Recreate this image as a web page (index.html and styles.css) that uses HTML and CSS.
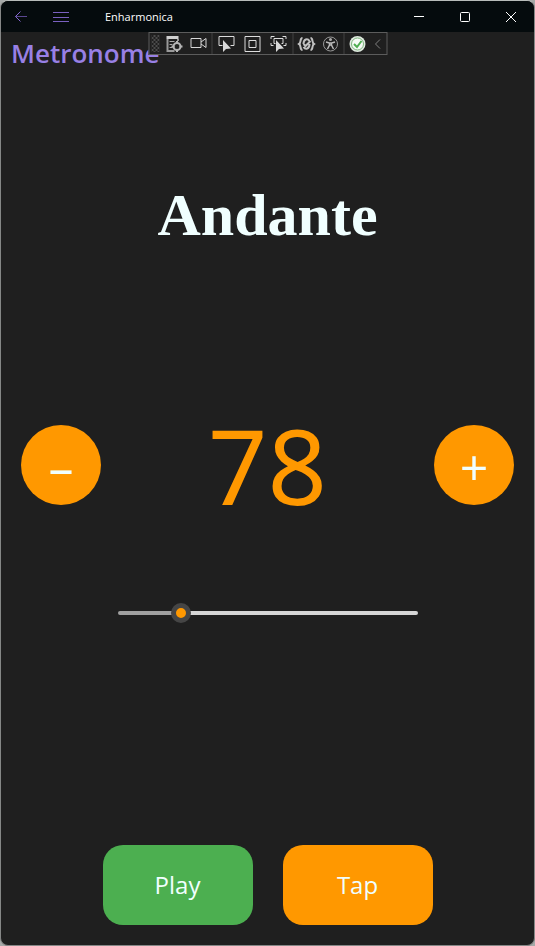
FILE: index.html
```html
<!DOCTYPE html>
<html lang="en">
<head>
<meta charset="utf-8">
<meta name="viewport" content="width=device-width, initial-scale=1">
<title>Enharmonica</title>
<link rel="stylesheet" href="styles.css">
</head>
<body>
<div class="window">
  <header class="titlebar">
    <button class="nav-button" aria-label="Back">
      <svg width="14" height="12" viewBox="0 0 14 12" fill="none" stroke="#8468cf"><path d="M1.500 5.500H13" stroke="#5b4892"/><path d="M6.500 .5l-5 5 5 5"/></svg>
    </button>
    <button class="nav-button" aria-label="Menu">
      <svg width="16" height="12" viewBox="0 0 16 12" stroke="#7a60c0"><path d="M0 1.500H16M0 6.500H16M0 10.500H16"/></svg>
    </button>
    <span class="app-name">Enharmonica</span>
    <button class="caption-button" aria-label="Minimize">
      <svg width="12" height="12" viewBox="0 0 12 12" stroke="#fff"><path d="M1 5.500H11"/></svg>
    </button>
    <button class="caption-button" aria-label="Maximize">
      <svg width="12" height="12" viewBox="0 0 12 12" stroke="#fff" fill="none"><rect x="1.500" y="1.500" width="9" height="9" rx="1"/></svg>
    </button>
    <button class="caption-button" aria-label="Close">
      <svg width="12" height="12" viewBox="0 0 12 12" stroke="#fff"><path d="m1 1 10 10M11 1 1 11"/></svg>
    </button>
  </header>

  <div class="page-header">
    <h1 class="page-title">Metronome</h1>
    <div class="debug-bar" role="toolbar" aria-label="Debug tools">
      <span class="grip"></span>
      <button class="tool" aria-label="Live visual tree">
        <svg width="18" height="18" viewBox="0 0 18 18" fill="none"><path d="M1 1h12v3H1z" fill="#d0d0d0"/><path d="M2 4v12h7M12.500 4v2" stroke="#999" stroke-width="2"/><path d="M4 6.500h5M4 9.500h3M4 12.500h3" stroke="#aaa"/><circle cx="11.500" cy="11.500" r="3.500" stroke="#b5b5b5" stroke-width="2"/><path d="M11.500 6v3M11.500 14v3M6 11.500h3M14 11.500h3" stroke="#b5b5b5" stroke-width="2"/></svg>
      </button>
      <button class="tool" aria-label="Record">
        <svg width="18" height="18" viewBox="0 0 18 18" fill="none" stroke="#d8d8d8"><path d="M1.500 3.500h10v9h-10zM11.500 7l5-3.500v9l-5-3.500"/></svg>
      </button>
      <span class="divider"></span>
      <button class="tool wide" aria-label="Select element">
        <svg width="18" height="18" viewBox="0 0 18 18" fill="none"><path d="M5 10.500H1.500v-9h15v9H13" stroke="#ddd"/><path d="M5.500 5v12l3-3 5-.500z" fill="#d8d8d8"/></svg>
      </button>
      <button class="tool wide" aria-label="Display layout adorners">
        <svg width="18" height="18" viewBox="0 0 18 18" fill="none" stroke="#ddd"><path d="M1.500 1.500h15v15h-15zM5.500 5.500h7v7h-7z"/></svg>
      </button>
      <button class="tool wide" aria-label="Track focused element">
        <svg width="18" height="18" viewBox="0 0 18 18" fill="none"><path d="M1.500 4V1.500H5M13 1.500h3.500V4M1.500 8v2.500H4M14 10.500h2.500V8M6 8.500H4.500v-5h9v5H12" stroke="#ddd"/><path d="M6.500 5v12l3-3 5-.500z" fill="#d8d8d8"/></svg>
      </button>
      <span class="divider"></span>
      <button class="tool" aria-label="Binding failures">
        <svg width="18" height="18" viewBox="0 0 18 18" fill="none" stroke="#c0c0c0" stroke-width="2"><path d="M5 3C2 3 4 8 1.500 9c2.500 1 .5 6 3.500 6M13 3c3 0 1 5 3.500 6-2.500 1-.5 6-3.500 6"/><path d="M6 9c0-5 4-6 6-3M12 9c0 5-4 6-6 3M6 9l2 2 5-5"/></svg>
      </button>
      <button class="tool" aria-label="Accessibility">
        <svg width="18" height="18" viewBox="0 0 18 18" fill="none" stroke="#999"><circle cx="9" cy="9" r="7"/><circle cx="9" cy="4.500" r="1.500" fill="#aaa" stroke="none"/><path d="M4.500 7 8 8v2l-2 4M13.500 7 10 8v2l2 4M8 8h2v2H8z" stroke="#b8b8b8" stroke-width="1.500"/></svg>
      </button>
      <span class="divider"></span>
      <button class="tool" aria-label="Hot reload ready">
        <svg width="18" height="18" viewBox="0 0 18 18"><circle cx="9" cy="9" r="8" fill="#dfe9df"/><circle cx="9" cy="9" r="6" fill="#f6fbf6" stroke="#7fb57f"/><path d="m5.500 9 3 3 4.500-6" fill="none" stroke="#4fae52" stroke-width="2"/></svg>
      </button>
      <button class="tool narrow" aria-label="Collapse toolbar">
        <svg width="8" height="12" viewBox="0 0 8 12" fill="none" stroke="#808080"><path d="M6.500 1.500 2 6l4.500 4.500"/></svg>
      </button>
    </div>
  </div>

  <main class="metronome">
    <h2 class="tempo-name">Andante</h2>
    <div class="tempo-row">
      <button class="round-button" aria-label="Slower">–</button>
      <output class="bpm" for="tempo">78</output>
      <button class="round-button" aria-label="Faster">+</button>
    </div>
    <input class="tempo-slider" id="tempo" type="range" min="40" max="240" value="78" aria-label="Tempo">
    <div class="actions">
      <button class="action play">Play</button>
      <button class="action tap">Tap</button>
    </div>
  </main>
</div>
</body>
</html>
```

FILE: styles.css
```css
* {
  box-sizing: border-box;
}

html {
  background: #a6a9a8;
}

body {
  margin: 0;
  font-family: "Open Sans", sans-serif;
  color: azure;
}

button {
  padding: 0;
  border: 0;
  background: none;
  color: inherit;
  font: inherit;
}

svg {
  display: block;
}

.window {
  display: flex;
  flex-direction: column;
  min-height: 100vh;
  border: 1px solid #858786;
  border-top-color: #b8bcba;
  border-radius: 8px;
  overflow: hidden;
  background: #1f1f1f;
}

.titlebar {
  display: flex;
  height: 31px;
  background: #050b0d;
}

.nav-button,
.caption-button,
.tool {
  display: flex;
  align-items: center;
  justify-content: center;
}

.nav-button {
  width: 40px;
}

.app-name {
  flex: 1;
  padding-left: 24px;
  color: #fff;
  font-size: 11px;
  font-weight: 500;
  line-height: 32px;
}

.caption-button {
  width: 46px;
}

.page-header {
  position: relative;
  height: 44px;
  padding-left: 10px;
}

.page-title {
  margin: 0;
  color: #9880e5;
  font-size: 26px;
  font-weight: 600;
  line-height: 42px;
}

.debug-bar {
  position: absolute;
  top: 0;
  left: 50%;
  transform: translateX(-50%);
  display: flex;
  align-items: stretch;
  height: 23px;
  border: 1px solid #5c5c5c;
  background: #1f1f1f;
}

.grip {
  width: 8px;
  margin: 2px 3px 2px 2px;
  background: conic-gradient(#4b4b4b 25%, transparent 0 50%, #4b4b4b 0 75%, transparent 0) 0 0 / 4px 4px;
}

.tool {
  width: 24px;
}

.tool.wide {
  width: 26px;
}

.tool.narrow {
  width: 17px;
}

.divider {
  width: 1px;
  margin: 0 1px;
  background: #424242;
}

.metronome {
  flex: 1;
  display: grid;
  grid-template-rows: 10fr 11fr 35px 9fr 80px;
  align-items: center;
  padding: 20px;
}

.tempo-name {
  margin: 0;
  font-family: "Liberation Serif", serif;
  font-size: 60px;
  font-weight: 700;
  line-height: 68px;
  text-align: center;
}

.tempo-row {
  display: flex;
  align-items: center;
  justify-content: space-between;
}

.round-button {
  width: 80px;
  height: 80px;
  padding-top: 4px;
  border-radius: 50%;
  background: #ff9800;
  font-size: 50px;
  font-weight: 500;
  line-height: 76px;
}

.bpm {
  color: #ff9800;
  font-family: "Noto Sans", sans-serif;
  font-size: 104px;
  line-height: 142px;
}

.tempo-slider {
  appearance: none;
  justify-self: center;
  width: 300px;
  height: 20px;
  margin: 0;
  background: none;
}

.tempo-slider::-webkit-slider-runnable-track {
  height: 4px;
  border-radius: 2px;
  background: linear-gradient(to right, #a0a0a0 21%, #d6d6d6 21%);
}

.tempo-slider::-webkit-slider-thumb {
  appearance: none;
  width: 20px;
  height: 20px;
  margin-top: -8px;
  border: 5px solid #454545;
  border-radius: 50%;
  background: #ff9800;
}

.actions {
  grid-row: 5;
  display: flex;
  justify-content: center;
  gap: 30px;
}

.action {
  width: 150px;
  height: 80px;
  border-radius: 20px;
  font-size: 24px;
}

.play {
  background: #4caf50;
}

.tap {
  background: #ff9800;
}
```
